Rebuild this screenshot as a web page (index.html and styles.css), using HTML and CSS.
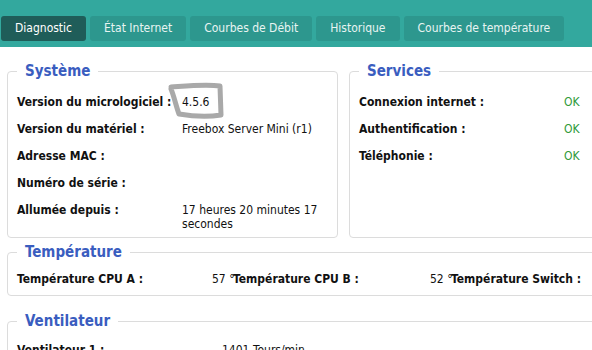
FILE: index.html
```html
<!DOCTYPE html>
<html lang="fr">
<head>
<meta charset="utf-8">
<title>Diagnostic</title>
<link rel="stylesheet" href="styles.css">
</head>
<body>
<div class="header">
  <nav class="tabs">
    <a class="tab active">Diagnostic</a>
    <a class="tab">État Internet</a>
    <a class="tab">Courbes de Débit</a>
    <a class="tab">Historique</a>
    <a class="tab">Courbes de température</a>
  </nav>
</div>
<main class="content">
  <div class="top-row">
    <fieldset class="box box-system">
      <legend>Système</legend>
      <div class="rows sys">
        <div class="lbl">Version du micrologiciel :</div><div class="val">4.5.6</div>
        <div class="lbl">Version du matériel :</div><div class="val">Freebox Server Mini (r1)</div>
        <div class="lbl">Adresse MAC :</div><div class="val"></div>
        <div class="lbl">Numéro de série :</div><div class="val"></div>
        <div class="lbl">Allumée depuis :</div><div class="val">17 heures 20 minutes 17 secondes</div>
      </div>
      <svg class="scribble" width="64" height="44" viewBox="0 0 64 44">
        <path d="M5 5 C20 4 40 2 54 4 L55 33 C42 35 25 34 13 32 C10 24 8 14 5 7" fill="none" stroke="#9a9a9a" stroke-width="5" stroke-linejoin="round" stroke-linecap="round" opacity="0.85"/>
      </svg>
    </fieldset>
    <fieldset class="box box-services">
      <legend>Services</legend>
      <div class="rows svc">
        <div class="lbl">Connexion internet :</div><div class="ok">OK</div>
        <div class="lbl">Authentification :</div><div class="ok">OK</div>
        <div class="lbl">Téléphonie :</div><div class="ok">OK</div>
      </div>
    </fieldset>
  </div>
  <fieldset class="box box-temp">
    <legend>Température</legend>
    <div class="rows temp">
      <div class="lbl">Température CPU A :</div><div class="val">57 °</div>
      <div class="lbl">Température CPU B :</div><div class="val">52 °</div>
      <div class="lbl">Température Switch :</div>
    </div>
  </fieldset>
  <fieldset class="box box-fan">
    <legend>Ventilateur</legend>
    <div class="rows fan">
      <div class="lbl">Ventilateur 1 :</div><div class="val">1401 Tours/min</div>
    </div>
  </fieldset>
</main>
</body>
</html>
```
FILE: styles.css
```css
html, body {
  margin: 0;
  padding: 0;
  background: #fff;
  overflow: hidden;
}
body {
  font-family: "DejaVu Sans Condensed", "DejaVu Sans", sans-serif;
  font-size: 12px;
  color: #111;
  width: 700px;
}
.header {
  background: #33a89e;
  height: 47px;
  box-sizing: border-box;
  padding: 16px 0 0 1px;
}
.tabs {
  display: flex;
  gap: 4px;
}
.tab {
  display: block;
  height: 25px;
  line-height: 25px;
  padding: 0 14px;
  background: #2d978e;
  color: #e8f4f2;
  border-radius: 3px;
  font-size: 12px;
}
.tab.active {
  background: #1f5d59;
  color: #fff;
}
.content {
  padding: 0 0 0 7px;
}
.top-row {
  display: flex;
  gap: 11px;
  margin-top: 15px;
  align-items: stretch;
}
.box {
  margin: 0;
  border: 1px solid #dcdcdc;
  border-radius: 4px;
  padding: 0 9px;
  min-width: 0;
}
.box legend {
  margin-left: 0;
  padding: 0 8px;
  font-size: 15px;
  font-weight: bold;
  line-height: 18px;
  color: #3a5dbf;
}
.box-system {
  position: relative;
  width: 331px;
  box-sizing: border-box;
  padding-bottom: 6px;
}
.box-services {
  width: 300px;
  box-sizing: border-box;
}
.rows {
  display: grid;
  line-height: 14px;
  padding-top: 15px;
  row-gap: 13px;
}
.lbl {
  font-weight: bold;
  white-space: nowrap;
}
.val {
  min-width: 0;
}
.sys {
  grid-template-columns: 165px 1fr;
}
.svc {
  grid-template-columns: 205px 1fr;
}
.ok {
  color: #2f9a3a;
}
.scribble {
  position: absolute;
  left: 158px;
  top: 2px;
}
.box-temp {
  margin-top: 5px;
  padding-bottom: 9px;
}
.temp {
  grid-template-columns: 195px 21px 197px 21px auto;
  padding-top: 11px;
}
.temp .val {
  white-space: nowrap;
}
.box-fan {
  margin-top: 16px;
}
.fan {
  grid-template-columns: 205px 1fr;
  padding-top: 13px;
}
```
